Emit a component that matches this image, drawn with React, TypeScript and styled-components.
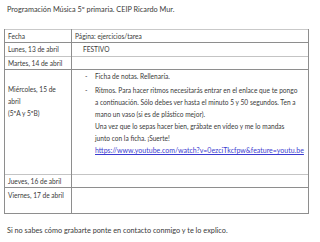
import React from "react";
import styled, { createGlobalStyle } from "styled-components";

const GlobalStyle = createGlobalStyle`
  html, body {
    margin: 0;
    padding: 0;
    background: #ffffff;
  }
  body {
    font-family: Lato, "Open Sans", "Liberation Sans", sans-serif;
    color: #3a3a3a;
  }
`;

const Page = styled.div`
  width: 320px;
  height: 242px;
  overflow: hidden;
  box-sizing: border-box;
  padding: 4px 0 0 0;
  font-size: 7.3px;
  line-height: 12px;
`;

const Heading = styled.div`
  padding-left: 7px;
  white-space: nowrap;
`;

const Sheet = styled.table`
  margin: 13px 0 0 4px;
  width: 305px;
  border-collapse: collapse;
  table-layout: fixed;
  border-top: 1px solid #c9c9c9;
  font-size: 6.6px;
  line-height: 12px;
`;

const Row = styled.tr<{ $h: number; $light?: boolean }>`
  height: ${(p) => p.$h}px;
  border-bottom: 1px solid ${(p) => (p.$light ? "#c4c4c4" : "#8e8e8e")};
`;

const DayCell = styled.td<{ $top?: number }>`
  width: 67px;
  box-sizing: border-box;
  vertical-align: top;
  padding: ${(p) => p.$top ?? 0}px 0 0 3px;
  border-left: 1px solid #8e8e8e;
  border-right: 1px solid #8e8e8e;
  white-space: nowrap;
`;

const TaskCell = styled.td<{ $indent?: number }>`
  vertical-align: top;
  padding: 0 0 0 ${(p) => p.$indent ?? 3}px;
  border-right: 1px solid #8e8e8e;
  white-space: nowrap;
`;

const Item = styled.div<{ $gap?: number }>`
  display: flex;
  margin-top: ${(p) => p.$gap ?? 0}px;
`;

const Dash = styled.span`
  width: 23px;
  padding-left: 13px;
  box-sizing: border-box;
  flex: none;
`;

const Lines = styled.div`
  display: flex;
  flex-direction: column;
`;

const Link = styled.a`
  color: #3b3bd0;
  font-size: 7px;
  text-decoration: underline;
`;

const Note = styled.div`
  padding: 11px 0 0 7px;
  white-space: nowrap;
`;

const App = () => {
  return (
    <Page>
      <GlobalStyle />
      <Heading>Programación Música 5º primaria. CEIP Ricardo Mur.</Heading>
      <Sheet>
        <tbody>
          <Row $h={13}>
            <DayCell>Fecha</DayCell>
            <TaskCell>Página: ejercicios/tarea</TaskCell>
          </Row>
          <Row $h={14} $light>
            <DayCell>Lunes, 13 de abril</DayCell>
            <TaskCell $indent={11}>FESTIVO</TaskCell>
          </Row>
          <Row $h={13}>
            <DayCell>Martes, 14 de abril</DayCell>
            <TaskCell />
          </Row>
          <Row $h={105} $light>
            <DayCell $top={13}>
              Miércoles, 15 de
              <br />
              abril
              <br />
              (5ºA y 5ºB)
            </DayCell>
            <TaskCell $indent={0}>
              <Item>
                <Dash>-</Dash>
                <span>Ficha de notas. Rellenaría.</span>
              </Item>
              <Item $gap={2}>
                <Dash>-</Dash>
                <Lines>
                  <span>Ritmos. Para hacer ritmos necesitarás entrar en el enlace que te pongo</span>
                  <span>a continuación. Sólo debes ver hasta el minuto 5 y 50 segundos. Ten a</span>
                  <span>mano un vaso (si es de plástico mejor).</span>
                  <span>Una vez que lo sepas hacer bien, grábate en vídeo y me lo mandas</span>
                  <span>junto con la ficha. ¡Suerte!</span>
                  <Link href="#">https://www.youtube.com/watch?v=0ezciTkcfpw&amp;feature=youtu.be</Link>
                </Lines>
              </Item>
            </TaskCell>
          </Row>
          <Row $h={13}>
            <DayCell>Jueves, 16 de abril</DayCell>
            <TaskCell />
          </Row>
          <Row $h={26}>
            <DayCell $top={1}>Viernes, 17 de abril</DayCell>
            <TaskCell />
          </Row>
        </tbody>
      </Sheet>
      <Note>Si no sabes cómo grabarte ponte en contacto conmigo y te lo explico.</Note>
    </Page>
  );
};

export default App;
